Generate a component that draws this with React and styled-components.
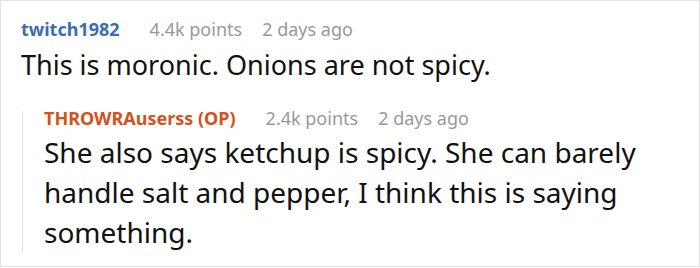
import styled, { createGlobalStyle } from "styled-components";

const GlobalStyle = createGlobalStyle`
  html, body {
    margin: 0;
    padding: 0;
    background: #fff;
  }
  body {
    font-family: "Noto Sans", "Open Sans", sans-serif;
  }
`;

export default function App() {
  return (
    <>
      <GlobalStyle />
      <Frame>
        <Meta>
          <Author>twitch1982</Author>
          <Info>4.4k points</Info>
          <Info>2 days ago</Info>
        </Meta>
        <Body>This is moronic. Onions are not spicy.</Body>
        <Reply>
          <Meta $reply>
            <Author $op>THROWRAuserss (OP)</Author>
            <Info>2.4k points</Info>
            <Info>2 days ago</Info>
          </Meta>
          <Body $reply>
            She also says ketchup is spicy. She can barely handle salt and
            pepper, I think this is saying something.
          </Body>
        </Reply>
      </Frame>
    </>
  );
}

const Frame = styled.div`
  box-sizing: border-box;
  width: 700px;
  height: 267px;
  border: 1px solid #e3e3e3;
  background: #fff;
  padding: 16px 20px 0 20px;
`;

const Meta = styled.div`
  display: flex;
  align-items: baseline;
  gap: 20px;
  line-height: ${(p) => (p.$reply ? "14px" : "24px")};
  margin-top: ${(p) => (p.$reply ? "-4px" : "0")};
`;

const Author = styled.span`
  font-size: 18px;
  font-weight: 700;
  margin-right: 10px;
  color: ${(p) => (p.$op ? "#d4521c" : "#3b6db6")};
`;

const Info = styled.span`
  font-size: 18px;
  color: #999;
`;

const Body = styled.div`
  font-size: ${(p) => (p.$reply ? "28px" : "27px")};
  line-height: 40px;
  color: #111;
  margin-top: ${(p) => (p.$reply ? "7px" : "4px")};
`;

const Reply = styled.div`
  border-left: 1px solid #e3e3e3;
  margin: 30px 0 0 1px;
  padding-left: 21px;
`;
